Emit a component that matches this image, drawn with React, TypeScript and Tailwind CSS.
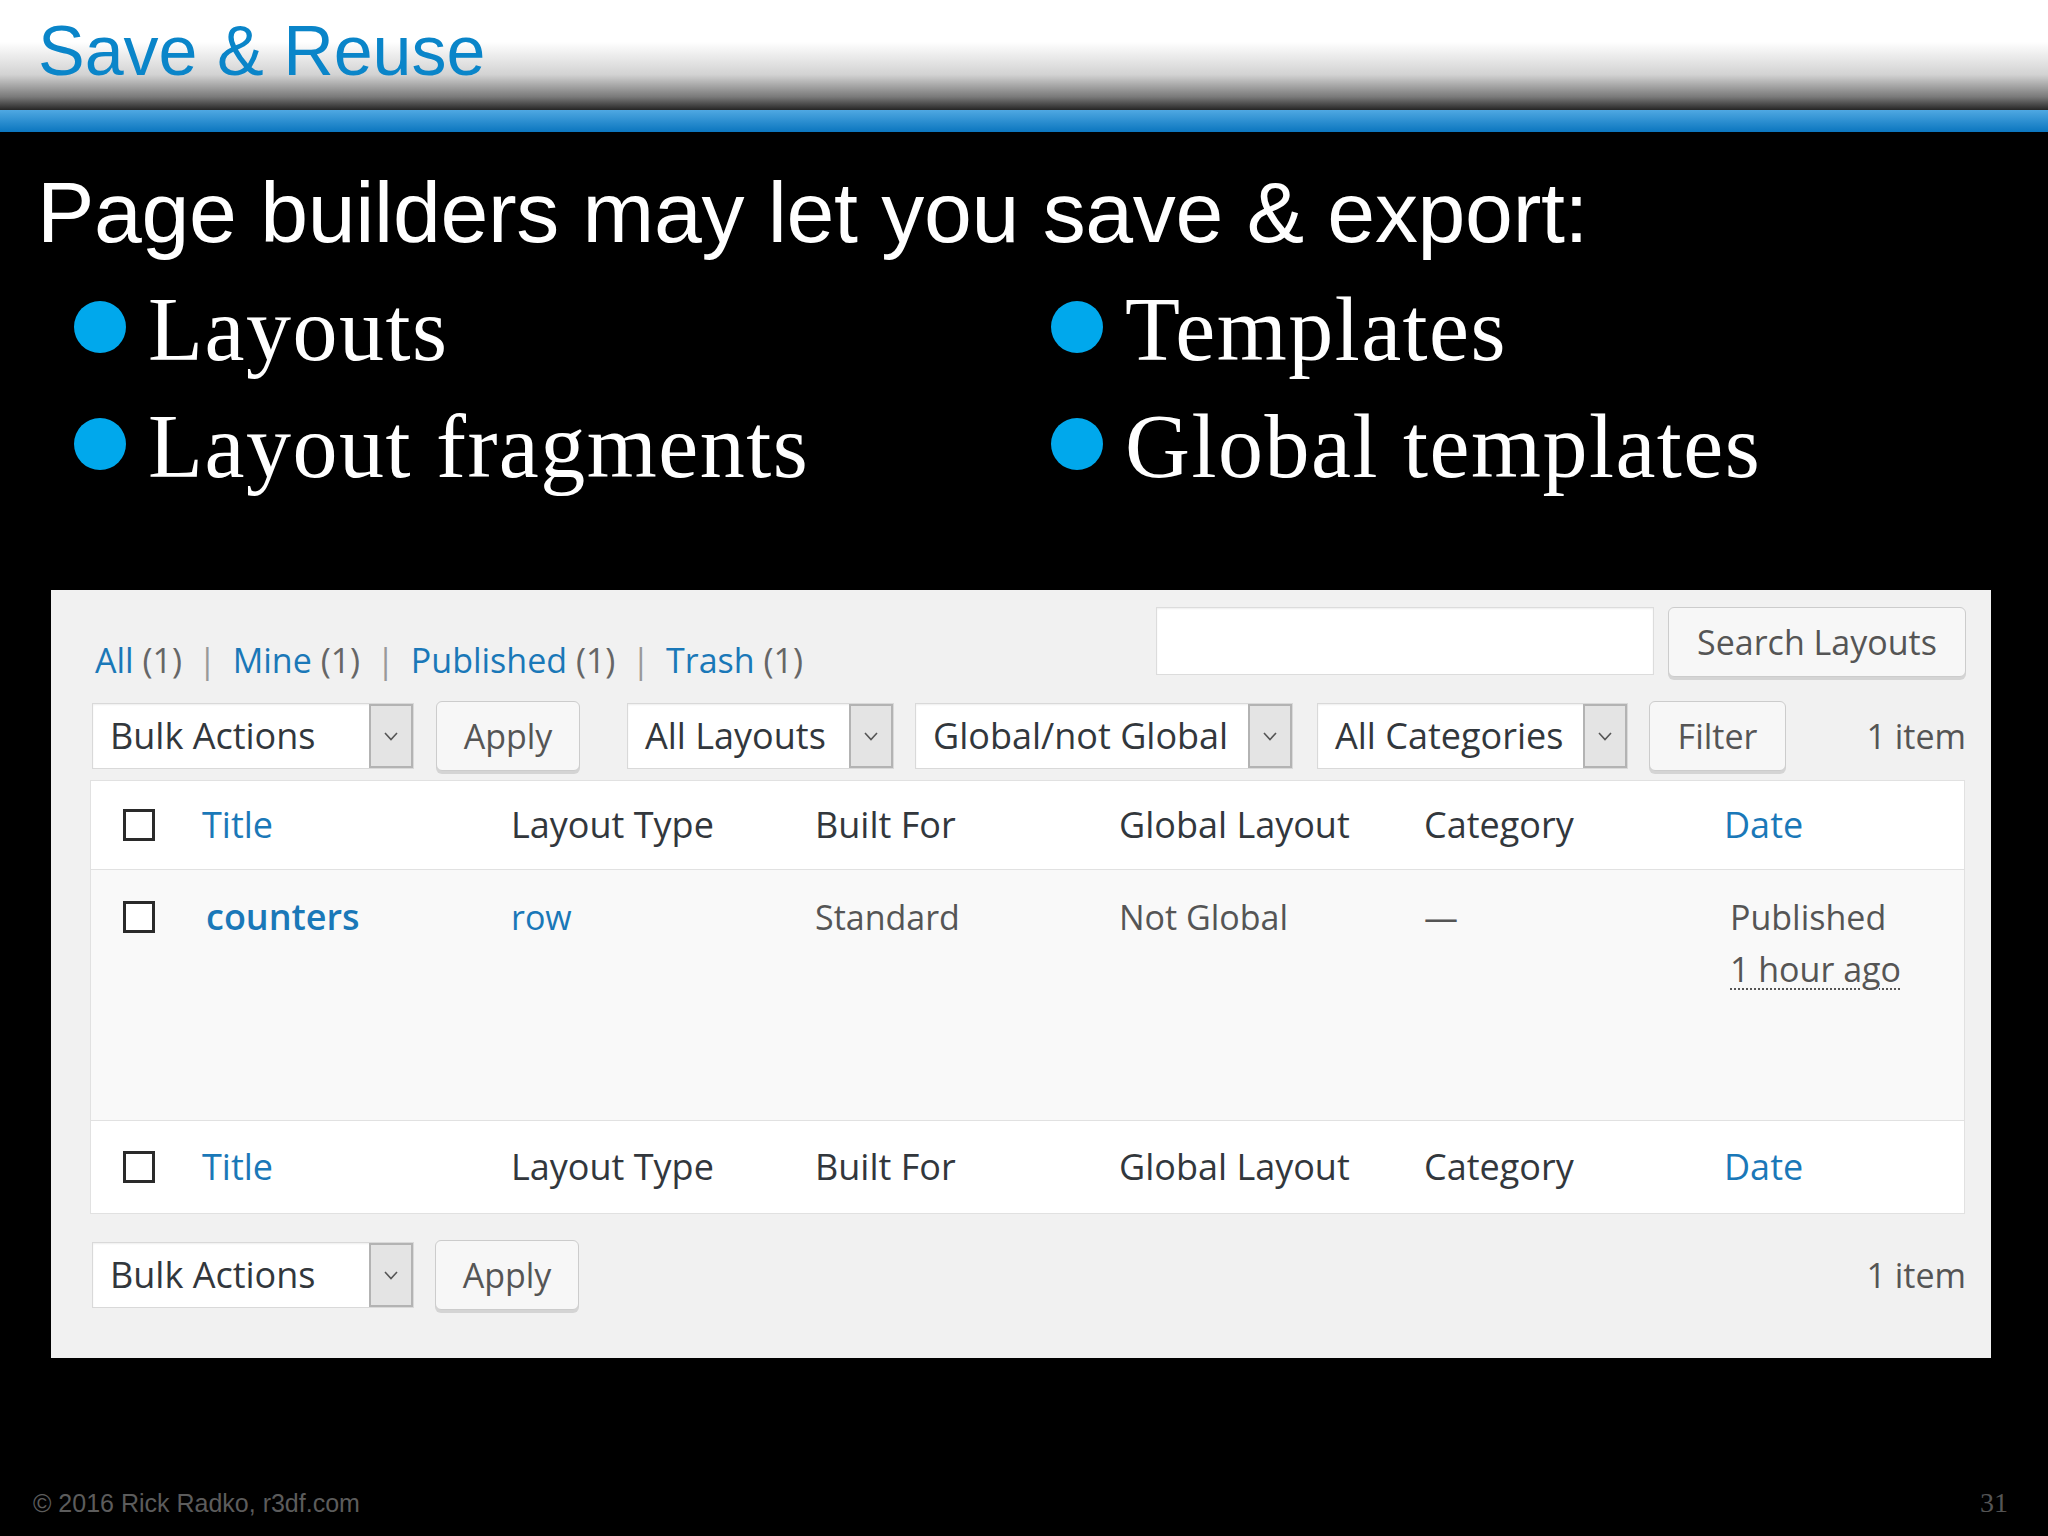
import React from 'react';

interface SelectProps {
  label: string;
  className: string;
}

function Chevron() {
  return (
    <svg width="14" height="9" viewBox="0 0 14 9" fill="none">
      <polyline points="1,1 7,7.5 13,1" stroke="#555" strokeWidth="1.6" />
    </svg>
  );
}

function Select({ label, className }: SelectProps) {
  return (
    <div className={`flex h-[66px] border border-[#d9d9d9] bg-white shadow-[inset_0_1px_2px_rgba(0,0,0,0.07)] ${className}`}>
      <div className="flex flex-1 items-center pl-[17px] text-[36px] leading-none text-[#32373c] whitespace-nowrap">{label}</div>
      <div className="flex w-[44px] items-center justify-center border-2 border-[#b3b3b3] bg-[#e4e4e4]">
        <Chevron />
      </div>
    </div>
  );
}

function Button({ label, className }: SelectProps) {
  return (
    <div className={`flex h-[70px] items-center justify-center rounded-[6px] border border-[#cccccc] bg-[#f7f7f7] text-[34px] leading-none text-[#555] shadow-[0_3px_0_#d4d4d4] ${className}`}>
      {label}
    </div>
  );
}

function Checkbox() {
  return <div className="h-[32px] w-[32px] border-[3px] border-[#2a2a2a] bg-white" />;
}

const cols = 'grid grid-cols-[99px_309px_304px_304px_305px_300px_1fr]';

function HeadRow({ className }: { className: string }) {
  return (
    <div className={`${cols} items-center text-[36px] leading-none text-[#32373c] ${className}`}>
      <div className="pl-[32px]"><Checkbox /></div>
      <div className="pl-[12px] text-[#1a78b8]">Title</div>
      <div className="pl-[12px]">Layout Type</div>
      <div className="pl-[12px]">Built For</div>
      <div className="pl-[12px]">Global Layout</div>
      <div className="pl-[12px]">Category</div>
      <div className="pl-[12px] text-[#1a78b8]">Date</div>
    </div>
  );
}

const bullets = [
  ['Layouts', 'Templates'],
  ['Layout fragments', 'Global templates'],
];

export default function App() {
  return (
    <div className="flex h-[1536px] w-[2048px] flex-col overflow-hidden bg-black">
      {/* slide header */}
      <div className="h-[110px] bg-[linear-gradient(to_bottom,#ffffff_0%,#ffffff_38%,#d2d2d2_68%,#7a7a7a_88%,#262626_100%)] pl-[38px] pt-[16px]">
        <h1 className="font-['Liberation_Sans',Arial,sans-serif] text-[70px] leading-[70px] text-[#0a85c9]">Save &amp; Reuse</h1>
      </div>
      <div className="h-[22px] bg-[linear-gradient(to_bottom,#4fa8e2,#0b76bf)]" />

      <div className="mt-[37px] pl-[37px] font-['Liberation_Sans',Arial,sans-serif] text-[86px] leading-[86px] tracking-[-0.3px] text-white whitespace-nowrap">
        Page builders may let you save &amp; export:
      </div>

      <div className="mt-[16px] grid grid-cols-[977px_1fr] pl-[74px] font-['Liberation_Serif','Times_New_Roman',serif] text-[90px] leading-[117px] text-white">
        {bullets.map(row =>
          row.map(text => (
            <div key={text} className="flex items-start whitespace-nowrap">
              <div className="mt-[30px] h-[52px] w-[52px] shrink-0 rounded-full bg-[#00a8ec]" />
              <span className="ml-[22px] tracking-[1.5px]">{text}</span>
            </div>
          ))
        )}
      </div>

      {/* screenshot of the layouts list */}
      <div className="ml-[51px] mt-[85px] h-[768px] w-[1940px] bg-[#f1f1f1] pl-[39px] pr-[25px] pt-[17px] font-['Open_Sans',sans-serif]">
        <div className="flex h-[70px] items-start justify-between">
          <div className="ml-[5px] mt-[36px] flex text-[34px] leading-[34px] text-[#1a78b8] whitespace-nowrap">
            <span>All <span className="text-[#666]">(1)</span></span>
            <span className="mx-[16px] text-[#999]">|</span>
            <span>Mine <span className="text-[#666]">(1)</span></span>
            <span className="mx-[16px] text-[#999]">|</span>
            <span>Published <span className="text-[#666]">(1)</span></span>
            <span className="mx-[16px] text-[#999]">|</span>
            <span>Trash <span className="text-[#666]">(1)</span></span>
          </div>
          <div className="flex items-start gap-[14px]">
            <div className="h-[68px] w-[498px] border border-[#dcdcdc] bg-white shadow-[inset_0_1px_2px_rgba(0,0,0,0.07)]" />
            <Button label="Search Layouts" className="w-[298px]" />
          </div>
        </div>

        <div className="mt-[24px] flex h-[70px] items-center pl-[2px]">
          <Select label="Bulk Actions" className="w-[322px]" />
          <Button label="Apply" className="ml-[22px] w-[144px]" />
          <Select label="All Layouts" className="ml-[47px] w-[267px]" />
          <Select label="Global/not Global" className="ml-[21px] w-[378px]" />
          <Select label="All Categories" className="ml-[24px] w-[311px]" />
          <Button label="Filter" className="ml-[21px] w-[137px]" />
          <div className="ml-auto text-[34px] leading-none text-[#555]">1 item</div>
        </div>

        <div className="mt-[9px] w-[1875px] border border-[#e1e1e1] bg-white">
          <HeadRow className="h-[89px] border-b border-[#e1e1e1]" />
          <div className={`${cols} h-[251px] items-start border-b border-[#e1e1e1] bg-[#f9f9f9] text-[34px] leading-[52px] text-[#555]`}>
            <div className="pl-[32px] pt-[31px]"><Checkbox /></div>
            <div className="pl-[16px] pt-[21px] text-[36px] font-semibold text-[#1a78b8]">counters</div>
            <div className="pl-[12px] pt-[21px] text-[#1a78b8]">row</div>
            <div className="pl-[12px] pt-[21px]">Standard</div>
            <div className="pl-[12px] pt-[21px]">Not Global</div>
            <div className="pl-[12px] pt-[21px]">—</div>
            <div className="pl-[18px] pt-[21px]">
              <div>Published</div>
              <div><span className="underline decoration-dotted decoration-[2px] underline-offset-[6px]">1 hour ago</span></div>
            </div>
          </div>
          <HeadRow className="h-[92px]" />
        </div>

        <div className="mt-[26px] flex h-[70px] items-center pl-[2px]">
          <Select label="Bulk Actions" className="w-[322px]" />
          <Button label="Apply" className="ml-[21px] w-[144px]" />
          <div className="ml-auto text-[34px] leading-none text-[#555]">1 item</div>
        </div>
      </div>

      <div className="flex flex-1 items-end justify-between pb-[18px] pl-[33px] pr-[40px]">
        <div className="font-['Liberation_Sans',Arial,sans-serif] text-[25px] leading-[30px] text-[#5c5c5c]">© 2016 Rick Radko, r3df.com</div>
        <div className="font-['Liberation_Serif',serif] text-[28px] leading-[30px] text-[#555]">31</div>
      </div>
    </div>
  );
}
